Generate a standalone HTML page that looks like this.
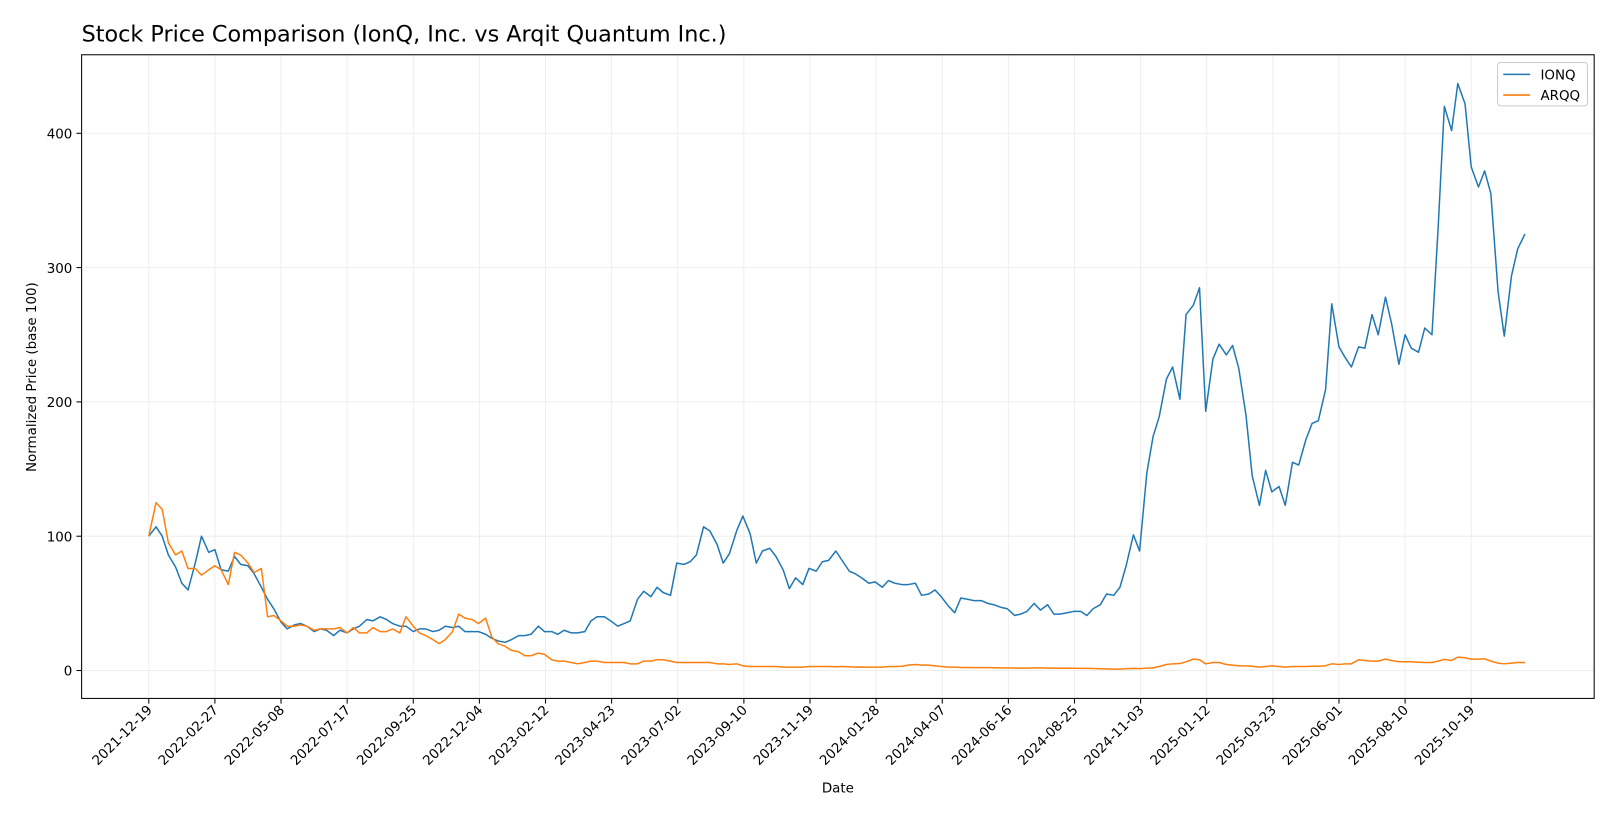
<!DOCTYPE html>
<html><head><meta charset="utf-8"><style>
html,body{margin:0;padding:0;background:#fff;}
svg{display:block;font-family:"DejaVu Sans","Liberation Sans",sans-serif;}
</style></head><body>
<svg width="1620" height="819" viewBox="0 0 1568 792.7" xmlns="http://www.w3.org/2000/svg">
<rect width="1568" height="793" fill="#fff"/>
<text x="79" y="40" font-size="21.6" fill="#000">Stock Price Comparison (IonQ, Inc. vs Arqit Quantum Inc.)</text>
<g stroke="#ebebeb" stroke-width="0.8">
<line x1="144" y1="53" x2="144" y2="676"/><line x1="208" y1="53" x2="208" y2="676"/><line x1="272" y1="53" x2="272" y2="676"/><line x1="336" y1="53" x2="336" y2="676"/><line x1="400" y1="53" x2="400" y2="676"/><line x1="464" y1="53" x2="464" y2="676"/><line x1="528" y1="53" x2="528" y2="676"/><line x1="592" y1="53" x2="592" y2="676"/><line x1="656" y1="53" x2="656" y2="676"/><line x1="720" y1="53" x2="720" y2="676"/><line x1="784" y1="53" x2="784" y2="676"/><line x1="848" y1="53" x2="848" y2="676"/><line x1="912" y1="53" x2="912" y2="676"/><line x1="976" y1="53" x2="976" y2="676"/><line x1="1040" y1="53" x2="1040" y2="676"/><line x1="1104" y1="53" x2="1104" y2="676"/><line x1="1168" y1="53" x2="1168" y2="676"/><line x1="1232" y1="53" x2="1232" y2="676"/><line x1="1296" y1="53" x2="1296" y2="676"/><line x1="1360" y1="53" x2="1360" y2="676"/><line x1="1424" y1="53" x2="1424" y2="676"/>
<line x1="79" y1="649" x2="1543" y2="649"/><line x1="79" y1="519" x2="1543" y2="519"/><line x1="79" y1="389" x2="1543" y2="389"/><line x1="79" y1="259" x2="1543" y2="259"/><line x1="79" y1="129" x2="1543" y2="129"/>
</g>
<g transform="translate(0,649) scale(1,-1.3)" fill="none" stroke-linejoin="round">
<polyline vector-effect="non-scaling-stroke" stroke="#1f77b4" stroke-width="1.5" points="144,100 151,107 157,100 163,86 170,77 176,65 182,60 189,80 195,100 202,88 208,90 214,75 221,74 227,85 233,79 240,78 246,72 253,62 259,53 265,46 272,36 278,31 285,34 291,35 297,33 304,29 310,31 316,30 323,26 329,30 336,28 342,31 348,33 355,38 361,37 368,40 374,38 380,35 387,33 393,33 400,29 406,31 412,31 419,29 425,30 431,33 438,32 444,33 450,29 457,29 463,29 470,27 476,24 482,22 489,21 495,23 502,26 508,26 514,27 521,33 527,29 534,29 540,27 546,30 553,28 559,28 566,29 572,37 578,40 585,40 591,37 598,33 604,35 610,37 617,53 623,59 630,55 636,62 642,58 649,56 655,80 662,79 668,81 674,86 681,107 687,104 694,94 700,80 706,87 713,104 719,115 726,102 732,80 738,89 745,91 751,85 758,75 764,61 770,69 777,64 783,76 790,74 796,81 802,82 809,89 815,82 822,74 828,72 834,69 841,65 847,66 854,62 860,67 866,65 873,64 879,64 886,65 892,56 899,57 905,60 911,55 918,48 924,43 930,54 937,53 943,52 950,52 956,50 962,49 969,47 975,46 982,41 988,42 994,44 1001,50 1007,45 1014,49 1020,42 1026,42 1033,43 1039,44 1046,44 1052,41 1058,46 1065,49 1071,57 1078,56 1084,62 1090,78 1097,101 1103,89 1110,147 1116,174 1122,189 1129,217 1135,226 1142,202 1148,265 1155,272 1161,285 1167,193 1174,232 1180,243 1187,235 1193,242 1199,225 1206,190 1212,145 1219,123 1225,149 1231,133 1238,137 1244,123 1251,155 1257,153 1264,172 1270,184 1276,186 1283,209 1289,273 1296,241 1302,233 1308,226 1315,241 1321,240 1328,265 1334,250 1341,278 1347,258 1354,228 1360,250 1366,240 1373,237 1379,255 1386,250 1392,330 1398,420 1405,402 1411,437 1418,422 1424,375 1431,360 1437,372 1443,355 1450,282 1456,249 1463,294 1469,314 1476,325"/>
<polyline vector-effect="non-scaling-stroke" stroke="#ff7f0e" stroke-width="1.5" points="144,100 151,125 157,120 163,95 170,86 176,89 182,76 189,76 195,71 202,75 208,78 214,75 221,64 227,88 233,86 240,80 246,73 253,76 259,40 265,41 272,37 278,33 285,33 291,34 297,33 304,30 310,31 316,31 323,31 329,32 336,28 342,32 348,28 355,28 361,32 368,29 374,29 380,31 387,28 393,40 400,33 406,28 412,26 419,23 425,20 431,23 438,29 444,42 450,39 457,38 463,35 470,39 476,25 482,20 489,18 495,15 502,14 508,11 514,11 521,13 527,12 534,8 540,7 546,7 553,6 559,5 566,6 572,7 578,7 585,6 591,6 598,6 604,6 610,5 617,5 623,7 630,7 636,8 642,8 649,7 655,6 662,6 668,6 674,6 681,6 687,6 694,5 700,5 706,4.5 713,5 719,3.5 726,3 732,3 738,3 745,3 751,3 758,2.5 764,2.5 770,2.5 777,2.5 783,3 790,3 796,3 802,3 809,2.8 815,3 822,2.8 828,2.5 834,2.6 841,2.5 847,2.5 854,2.5 860,3 866,3 873,3.2 879,4 886,4.5 892,4 899,4 905,3.5 911,3 918,2.5 924,2.5 930,2.3 937,2.3 943,2.2 950,2.2 956,2.2 962,2.1 969,2 975,2 982,1.8 988,1.8 994,1.8 1001,2 1007,2 1014,1.8 1020,1.8 1026,1.7 1033,1.8 1039,1.7 1046,1.6 1052,1.6 1058,1.5 1065,1.3 1071,1.2 1078,1 1084,1 1090,1.3 1097,1.6 1103,1.4 1110,1.8 1116,2 1122,3 1129,4.5 1135,5 1142,5.2 1148,6.5 1155,8.5 1161,8 1167,5 1174,6 1180,6 1187,4.5 1193,4 1199,3.5 1206,3.5 1212,3.2 1219,2.5 1225,3 1231,3.5 1238,3 1244,2.5 1251,3 1257,3 1264,3 1270,3.2 1276,3.2 1283,3.6 1289,5 1296,4.5 1302,5 1308,5 1315,8 1321,7.5 1328,7 1334,7 1341,8.5 1347,7.5 1354,6.5 1360,6.5 1366,6.5 1373,6.2 1379,6 1386,6 1392,7 1398,8.3 1405,7.5 1411,10 1418,9.5 1424,8.5 1431,8.5 1437,8.7 1443,7 1450,5.5 1456,5 1463,5.5 1469,6 1476,6"/>
</g>
<rect x="79" y="53" width="1464" height="623" fill="none" stroke="#000" stroke-width="1"/>
<g stroke="#000" stroke-width="1">
<line x1="74" y1="649" x2="79" y2="649"/><line x1="74" y1="519" x2="79" y2="519"/><line x1="74" y1="389" x2="79" y2="389"/><line x1="74" y1="259" x2="79" y2="259"/><line x1="74" y1="129" x2="79" y2="129"/>
<line x1="144" y1="676" x2="144" y2="681"/><line x1="208" y1="676" x2="208" y2="681"/><line x1="272" y1="676" x2="272" y2="681"/><line x1="336" y1="676" x2="336" y2="681"/><line x1="400" y1="676" x2="400" y2="681"/><line x1="464" y1="676" x2="464" y2="681"/><line x1="528" y1="676" x2="528" y2="681"/><line x1="592" y1="676" x2="592" y2="681"/><line x1="656" y1="676" x2="656" y2="681"/><line x1="720" y1="676" x2="720" y2="681"/><line x1="784" y1="676" x2="784" y2="681"/><line x1="848" y1="676" x2="848" y2="681"/><line x1="912" y1="676" x2="912" y2="681"/><line x1="976" y1="676" x2="976" y2="681"/><line x1="1040" y1="676" x2="1040" y2="681"/><line x1="1104" y1="676" x2="1104" y2="681"/><line x1="1168" y1="676" x2="1168" y2="681"/><line x1="1232" y1="676" x2="1232" y2="681"/><line x1="1296" y1="676" x2="1296" y2="681"/><line x1="1360" y1="676" x2="1360" y2="681"/><line x1="1424" y1="676" x2="1424" y2="681"/>
</g>
<g font-size="13" fill="#000" text-anchor="end">
<text x="70" y="654">0</text><text x="70" y="524">100</text><text x="70" y="394">200</text><text x="70" y="264">300</text><text x="70" y="134">400</text>
</g>
<g font-size="13" fill="#000" text-anchor="end">
<text transform="translate(148,688) rotate(-45)">2021-12-19</text>
<text transform="translate(212,688) rotate(-45)">2022-02-27</text>
<text transform="translate(276,688) rotate(-45)">2022-05-08</text>
<text transform="translate(340,688) rotate(-45)">2022-07-17</text>
<text transform="translate(404,688) rotate(-45)">2022-09-25</text>
<text transform="translate(468,688) rotate(-45)">2022-12-04</text>
<text transform="translate(532,688) rotate(-45)">2023-02-12</text>
<text transform="translate(596,688) rotate(-45)">2023-04-23</text>
<text transform="translate(660,688) rotate(-45)">2023-07-02</text>
<text transform="translate(724,688) rotate(-45)">2023-09-10</text>
<text transform="translate(788,688) rotate(-45)">2023-11-19</text>
<text transform="translate(852,688) rotate(-45)">2024-01-28</text>
<text transform="translate(916,688) rotate(-45)">2024-04-07</text>
<text transform="translate(980,688) rotate(-45)">2024-06-16</text>
<text transform="translate(1044,688) rotate(-45)">2024-08-25</text>
<text transform="translate(1108,688) rotate(-45)">2024-11-03</text>
<text transform="translate(1172,688) rotate(-45)">2025-01-12</text>
<text transform="translate(1236,688) rotate(-45)">2025-03-23</text>
<text transform="translate(1300,688) rotate(-45)">2025-06-01</text>
<text transform="translate(1364,688) rotate(-45)">2025-08-10</text>
<text transform="translate(1428,688) rotate(-45)">2025-10-19</text>
</g>
<text x="811" y="767" font-size="13" text-anchor="middle">Date</text>
<text transform="translate(35,365) rotate(-90)" font-size="13" text-anchor="middle">Normalized Price (base 100)</text>
<rect x="1449.5" y="60.5" width="87" height="42" rx="3" fill="#fff" fill-opacity="0.8" stroke="#ccc"/>
<line x1="1455" y1="72" x2="1481" y2="72" stroke="#1f77b4" stroke-width="1.5"/>
<line x1="1455" y1="92" x2="1481" y2="92" stroke="#ff7f0e" stroke-width="1.5"/>
<text x="1491" y="77" font-size="13">IONQ</text>
<text x="1491" y="97" font-size="13">ARQQ</text>
</svg>
</body></html>
